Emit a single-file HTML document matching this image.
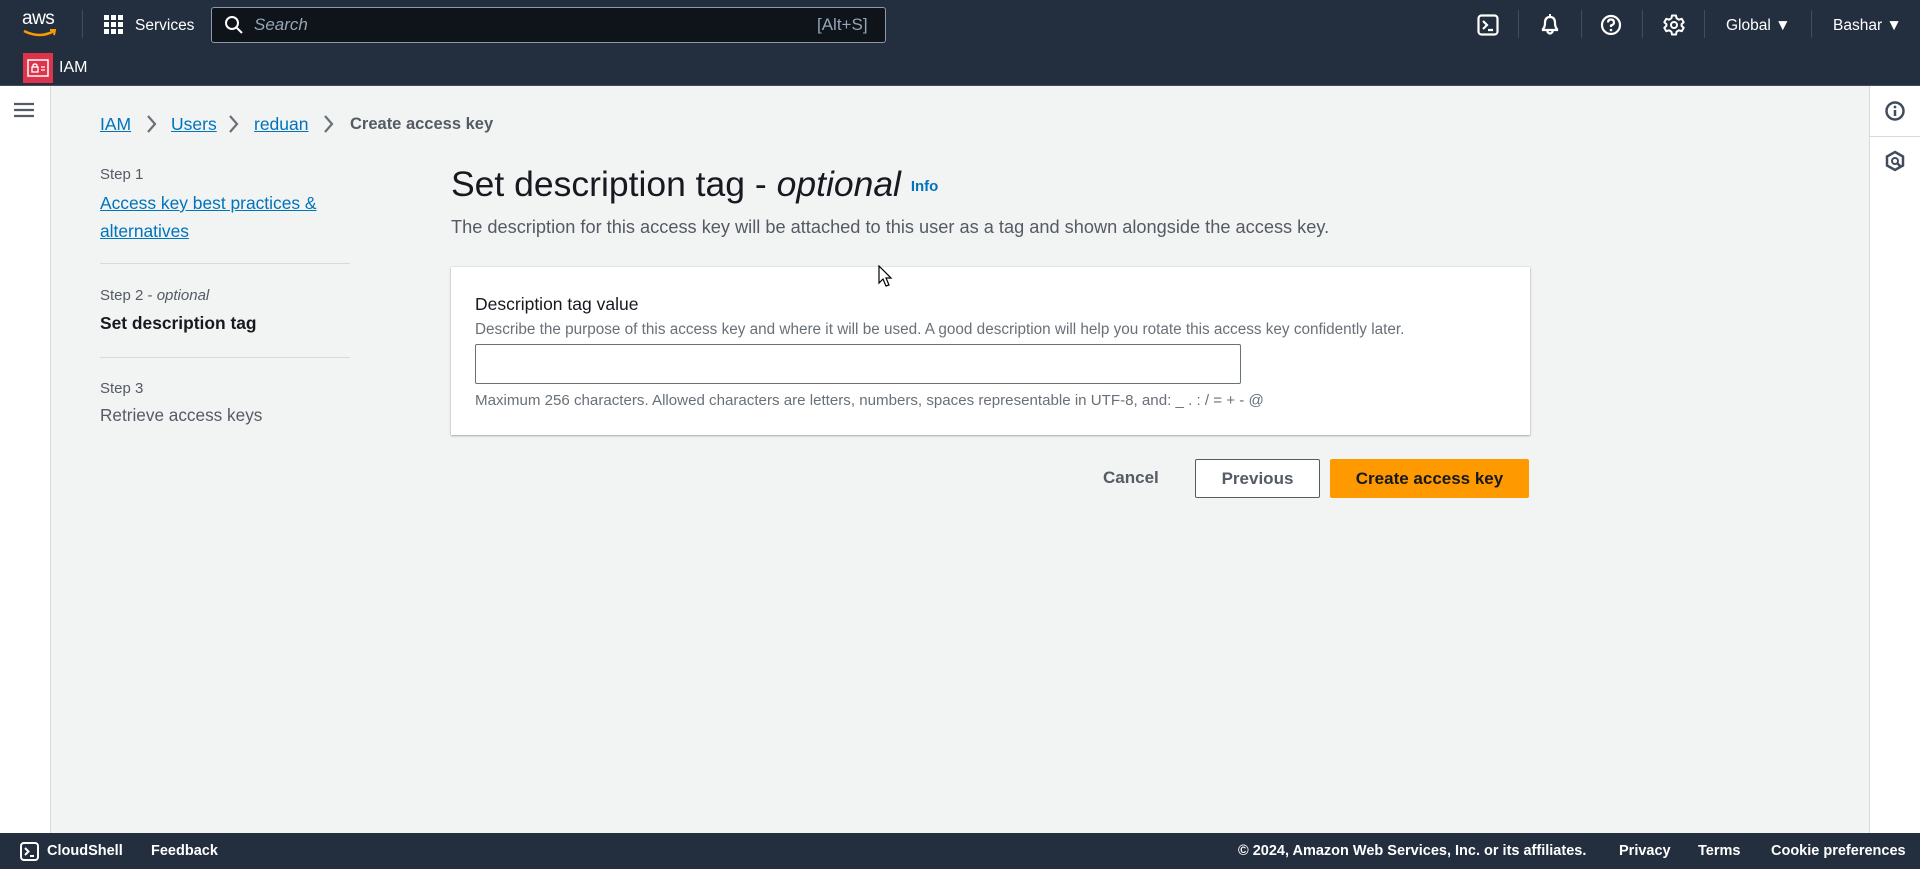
<!DOCTYPE html>
<html><head><meta charset="utf-8"><style>
*{box-sizing:border-box;margin:0;padding:0}
body{width:1920px;height:869px;overflow:hidden;background:#f2f3f3;font-family:"Liberation Sans",sans-serif;color:#16191f;position:relative}
.abs{position:absolute}
.hdr{left:0;top:0;width:1920px;height:86px;background:#232f3e;border-bottom:1px solid #414d5c}
.w{color:#fff}
.lnk{color:#0073bb;text-decoration:underline}
.sep{width:1px;height:28px;background:#414d5c;top:10px}
.foot{left:0;top:833px;width:1920px;height:36px;background:#232f3e;color:#fff;font-size:14.5px}
.foot span{position:absolute;top:10px}
.bc{top:114px;font-size:17.5px}
.chev{top:114px}
</style></head><body>
<div class="abs hdr">
  <div class="abs w" style="left:22px;top:8px;font-size:19px;letter-spacing:-0.5px">aws</div>
  <svg class="abs" style="left:22px;top:28px" width="36" height="10"><path d="M2 3 Q18 11 32 3" stroke="#f90" stroke-width="2.5" fill="none"/><path d="M28 2 L33 2 L32 7" stroke="#f90" stroke-width="2" fill="none"/></svg>
  <div class="abs sep" style="left:82px"></div>
  <svg class="abs" style="left:104px;top:15px" width="20" height="20" fill="#fff"><rect x="0" y="0" width="5" height="5"/><rect x="7" y="0" width="5" height="5"/><rect x="14" y="0" width="5" height="5"/><rect x="0" y="7" width="5" height="5"/><rect x="7" y="7" width="5" height="5"/><rect x="14" y="7" width="5" height="5"/><rect x="0" y="14" width="5" height="5"/><rect x="7" y="14" width="5" height="5"/><rect x="14" y="14" width="5" height="5"/></svg>
  <div class="abs w" style="left:135px;top:17px;font-size:15.5px">Services</div>
  <div class="abs" style="left:211px;top:7px;width:675px;height:36px;background:#0f141a;border:1px solid #8d99a8;border-radius:3px"></div>
  <svg class="abs" style="left:224px;top:15px" width="20" height="20"><circle cx="8" cy="8" r="6" stroke="#fff" stroke-width="2" fill="none"/><path d="M12.5 12.5 L18 18" stroke="#fff" stroke-width="2"/></svg>
  <div class="abs" style="left:254px;top:15px;font-size:17px;font-style:italic;color:#95a5b5">Search</div>
  <div class="abs" style="left:817px;top:15px;font-size:17px;color:#95a5b5">[Alt+S]</div>
  <svg class="abs" style="left:1477px;top:14px" width="22" height="22"><rect x="1.5" y="1.5" width="19" height="19" rx="3" stroke="#fff" stroke-width="2.2" fill="none"/><path d="M6 7 L10 11 L6 15 M11 16 L16 16" stroke="#fff" stroke-width="2.2" fill="none"/></svg>
  <div class="abs sep" style="left:1518px"></div>
  <svg class="abs" style="left:1539px;top:13px" width="22" height="24"><path d="M4 17 L4 16 Q6 14 6 10 Q6 4 11 4 Q16 4 16 10 Q16 14 18 16 L18 17 Z" stroke="#fff" stroke-width="2.2" fill="none"/><path d="M8 18 Q11 23 14 18" stroke="#fff" stroke-width="2.2" fill="none"/><path d="M11 1 L11 4" stroke="#fff" stroke-width="2"/></svg>
  <div class="abs sep" style="left:1581px"></div>
  <svg class="abs" style="left:1600px;top:14px" width="22" height="22"><circle cx="11" cy="11" r="9" stroke="#fff" stroke-width="2.2" fill="none"/><path d="M8 8.5 Q8 5.5 11 5.5 Q14 5.5 14 8.5 Q14 10.5 11 11.5 L11 13" stroke="#fff" stroke-width="2.2" fill="none"/><circle cx="11" cy="16" r="1.3" fill="#fff"/></svg>
  <div class="abs sep" style="left:1642px"></div>
  <svg class="abs" style="left:1663px;top:14px" width="22" height="22" viewBox="0 0 22 22"><path d="M9 1.5 H13 L13.6 4.3 L16 5.7 L18.7 4.8 L20.7 8.2 L18.6 10.1 V11.9 L20.7 13.8 L18.7 17.2 L16 16.3 L13.6 17.7 L13 20.5 H9 L8.4 17.7 L6 16.3 L3.3 17.2 L1.3 13.8 L3.4 11.9 V10.1 L1.3 8.2 L3.3 4.8 L6 5.7 L8.4 4.3 Z" stroke="#fff" stroke-width="2" fill="none" stroke-linejoin="round"/><circle cx="11" cy="11" r="3" stroke="#fff" stroke-width="2" fill="none"/></svg>
  <div class="abs sep" style="left:1704px"></div>
  <div class="abs w" style="left:1726px;top:17px;font-size:15.5px">Global ▼</div>
  <div class="abs sep" style="left:1811px"></div>
  <div class="abs w" style="left:1833px;top:17px;font-size:15.5px">Bashar ▼</div>
  <div class="abs" style="left:23px;top:53px;width:30px;height:30px;background:#dd344c"></div>
  <svg class="abs" style="left:27px;top:59px" width="22" height="18"><rect x="1" y="1" width="20" height="16" stroke="#fff" stroke-width="1.5" fill="none"/><rect x="5" y="8" width="6" height="5" stroke="#fff" stroke-width="1.3" fill="none"/><path d="M6 8 V6 Q8 4 10 6 V8 M14 8 H18 M14 11 H18" stroke="#fff" stroke-width="1.3" fill="none"/></svg>
  <div class="abs w" style="left:59px;top:59px;font-size:16px">IAM</div>
</div>
<div class="abs" style="left:0;top:86px;width:51px;height:747px;background:#fff;border-right:1px solid #d5dbdb"></div>
<svg class="abs" style="left:14px;top:102px" width="20" height="16"><path d="M0 2H20M0 8H20M0 14H20" stroke="#545b64" stroke-width="2.2"/></svg>
<div class="abs" style="left:1869px;top:86px;width:51px;height:747px;background:#fff;border-left:1px solid #d5dbdb"></div>
<div class="abs" style="left:1869px;top:136px;width:51px;height:1px;background:#d5dbdb"></div>
<svg class="abs" style="left:1884px;top:100px" width="22" height="22"><circle cx="11" cy="11" r="8.5" stroke="#414d5c" stroke-width="2.5" fill="none"/><path d="M11 10V16" stroke="#414d5c" stroke-width="2.5"/><circle cx="11" cy="7" r="1.4" fill="#414d5c"/></svg>
<svg class="abs" style="left:1884px;top:150px" width="22" height="22"><path d="M11 2 L19 6.5 V15.5 L11 20 L3 15.5 V6.5 Z" stroke="#414d5c" stroke-width="2.5" fill="none"/><circle cx="11" cy="11" r="3" stroke="#414d5c" stroke-width="2" fill="none"/><path d="M13 13 L17 17" stroke="#414d5c" stroke-width="2.5"/></svg>

<div class="abs bc lnk" style="left:100px">IAM</div>
<svg class="abs chev" style="left:145px" width="12" height="20"><path d="M3 2 L10 10 L3 18" stroke="#687078" stroke-width="2.2" fill="none"/></svg>
<div class="abs bc lnk" style="left:171px">Users</div>
<svg class="abs chev" style="left:227px" width="12" height="20"><path d="M3 2 L10 10 L3 18" stroke="#687078" stroke-width="2.2" fill="none"/></svg>
<div class="abs bc lnk" style="left:254px">reduan</div>
<svg class="abs chev" style="left:322px" width="12" height="20"><path d="M3 2 L10 10 L3 18" stroke="#687078" stroke-width="2.2" fill="none"/></svg>
<div class="abs bc" style="left:350px;font-weight:bold;color:#545b64;font-size:16.5px;top:115px">Create access key</div>

<div class="abs" style="left:100px;top:166px;font-size:15px;color:#545b64">Step 1</div>
<div class="abs lnk" style="left:100px;top:189px;font-size:17.4px;line-height:28px;width:250px">Access key best practices &amp; alternatives</div>
<div class="abs" style="left:100px;top:263px;width:250px;height:1px;background:#d5dbdb"></div>
<div class="abs" style="left:100px;top:287px;font-size:15px;color:#545b64">Step 2 - <i>optional</i></div>
<div class="abs" style="left:100px;top:313px;font-size:17.4px;font-weight:bold">Set description tag</div>
<div class="abs" style="left:100px;top:357px;width:250px;height:1px;background:#d5dbdb"></div>
<div class="abs" style="left:100px;top:380px;font-size:15px;color:#545b64">Step 3</div>
<div class="abs" style="left:100px;top:405px;font-size:17.2px;color:#545b64">Retrieve access keys</div>

<div class="abs" style="left:451px;top:164px;font-size:35.5px">Set description tag - <i>optional</i> <span style="font-size:15px;font-weight:bold;color:#0073bb;vertical-align:middle">Info</span></div>
<div class="abs" style="left:451px;top:217px;font-size:18.2px;color:#545b64">The description for this access key will be attached to this user as a tag and shown alongside the access key.</div>

<div class="abs" style="left:451px;top:267px;width:1079px;height:168px;background:#fff;box-shadow:0 1px 2px rgba(0,28,36,.3),0 0 1px rgba(0,28,36,.25)"></div>
<div class="abs" style="left:475px;top:294px;font-size:17.5px">Description tag value</div>
<div class="abs" style="left:475px;top:321px;font-size:15.3px;color:#687078">Describe the purpose of this access key and where it will be used. A good description will help you rotate this access key confidently later.</div>
<div class="abs" style="left:475px;top:344px;width:766px;height:40px;border:1px solid #687078;border-radius:2px;background:#fff"></div>
<div class="abs" style="left:475px;top:392px;font-size:15.1px;color:#687078">Maximum 256 characters. Allowed characters are letters, numbers, spaces representable in UTF-8, and: _ . : / = + - @</div>

<div class="abs" style="left:1103px;top:468px;font-size:17px;font-weight:bold;color:#545b64">Cancel</div>
<div class="abs" style="left:1195px;top:459px;width:125px;height:39px;border:1px solid #545b64;border-radius:2px;background:#fff;font-size:17px;font-weight:bold;color:#545b64;text-align:center;line-height:37px">Previous</div>
<div class="abs" style="left:1330px;top:459px;width:199px;height:39px;border-radius:2px;background:#ff9900;font-size:17px;font-weight:bold;color:#16191f;text-align:center;line-height:39px">Create access key</div>

<svg class="abs" style="left:878px;top:265px" width="16" height="24"><path d="M1 1 L1 18 L5 14 L8 21 L11 20 L8 13 L13 13 Z" fill="#fff" stroke="#000" stroke-width="1.2"/></svg>

<div class="abs foot">
<svg class="abs" style="left:20px;top:9px" width="19" height="19"><rect x="1" y="1" width="17" height="17" rx="3" stroke="#fff" stroke-width="2" fill="none"/><path d="M5 6 L8.5 9.5 L5 13 M10 14 L14 14" stroke="#fff" stroke-width="2" fill="none"/></svg>
<span style="left:47px;font-weight:bold">CloudShell</span>
<span style="left:151px;font-weight:bold">Feedback</span>
<span style="left:1238px;font-weight:bold">© 2024, Amazon Web Services, Inc. or its affiliates.</span>
<span style="left:1619px;font-weight:bold">Privacy</span>
<span style="left:1698px;font-weight:bold">Terms</span>
<span style="left:1771px;font-weight:bold">Cookie preferences</span>
</div>
</body></html>
